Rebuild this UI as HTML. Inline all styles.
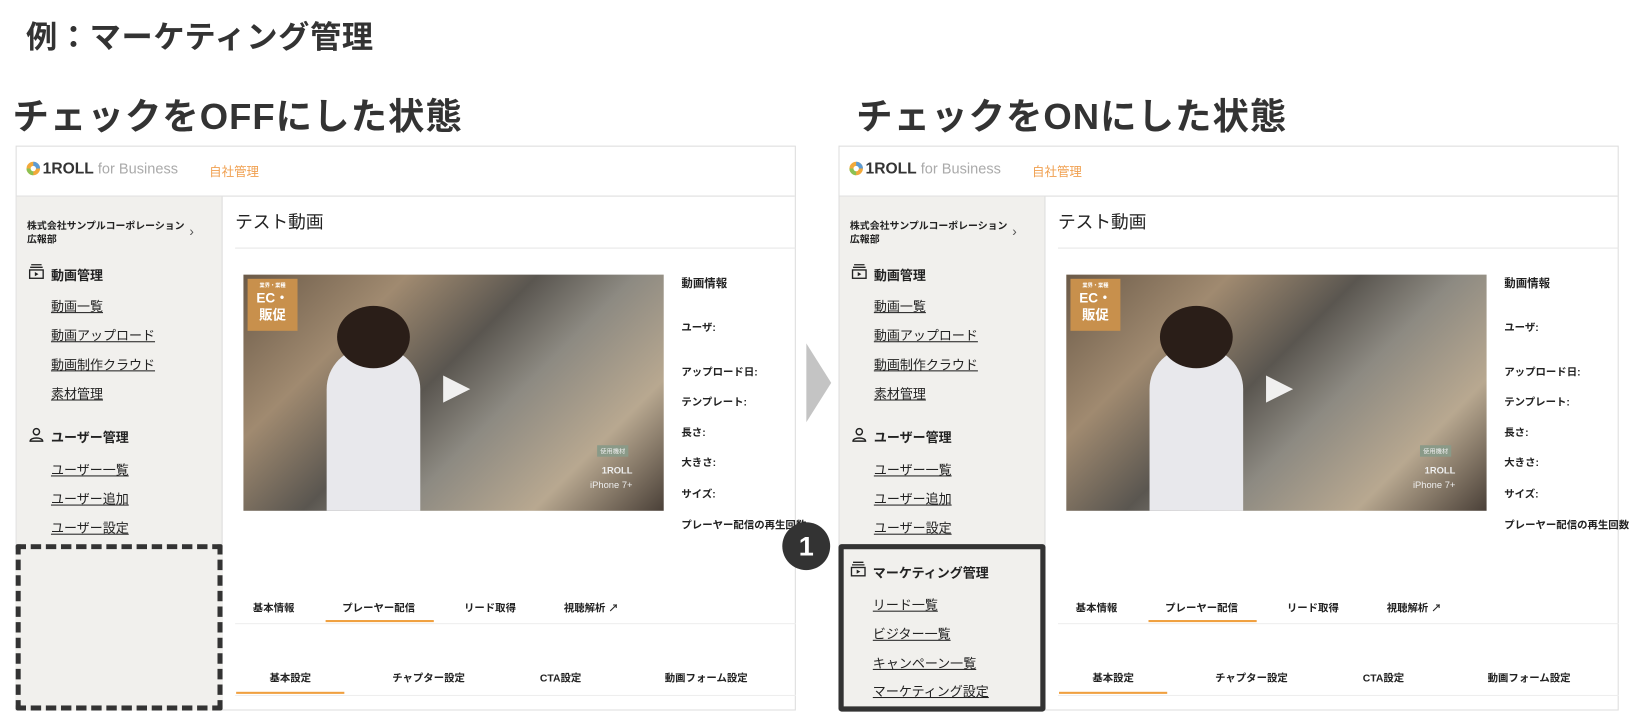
<!DOCTYPE html>
<html><head><meta charset="utf-8">
<style>
*{margin:0;padding:0;box-sizing:border-box}
html,body{width:1630px;height:728px;overflow:hidden;background:#fff}
body{font-family:"Liberation Sans","Noto Sans CJK JP",sans-serif;color:#222}
#w{position:absolute;left:0;top:0;width:1567px;height:700px;transform:scale(1.0403);transform-origin:0 0}
.a{position:absolute;white-space:nowrap}
.t1{font-size:30px;font-weight:bold;color:#333;left:25px;top:11px;letter-spacing:0.6px}
.t2{font-size:35px;font-weight:bold;color:#333;top:84px;letter-spacing:1px}
.p{position:absolute;top:140px;width:750px;height:543px;border:1px solid #ddd;background:#fff}
.hd{position:absolute;left:0;top:0;width:748px;height:48px;border-bottom:1px solid #ddd}
.sb{position:absolute;left:0;top:48px;width:198px;height:494px;background:#f1f0ed;border-right:1px solid #ddd}
.lk{font-size:12.5px;text-decoration:underline;color:#222}
.sh{font-size:12.5px;font-weight:bold}
.sm{font-size:9.5px;font-weight:bold}
.tb{font-size:10px;font-weight:bold}
.vid{position:absolute;left:218px;top:123px;width:404px;height:227px;overflow:hidden;
background:linear-gradient(135deg,#6b5a48 0%,#a08a70 25%,#5a5650 45%,#8d8a82 60%,#b8a890 80%,#4a4038 100%)}
</style></head><body><div id="w">
<div class="a t1">例：マーケティング管理</div>
<div class="a t2" style="left:12px">チェックをOFFにした状態</div>
<div class="a t2" style="left:823px">チェックをONにした状態</div>

<svg class="a" style="left:775px;top:330px" width="26" height="76"><polygon points="0,0 24,38 0,76" fill="#c4c4c4"/></svg>

<div class="p" style="left:15px" id="p1">
 <div class="hd">
  <svg class="a" style="left:9px;top:14px" width="14" height="14"><circle cx="7" cy="7" r="6.5" fill="#f2a93b"/><path d="M7 .5A6.5 6.5 0 0 1 13.5 7L7 7Z" fill="#5b9bd5"/><path d="M.5 7A6.5 6.5 0 0 0 7 13.5L7 7Z" fill="#8cc152"/><circle cx="7" cy="7" r="2.6" fill="#fff"/></svg>
  <div class="a" style="left:25px;top:13px;font-size:15px;font-weight:bold;color:#333">1ROLL <span style="font-weight:normal;color:#aaa;font-size:14px">for Business</span></div>
  <div class="a" style="left:185px;top:15px;font-size:12px;color:#f0a050">自社管理</div>
 </div>
 <div class="sb">
  <div class="a sm" style="left:10px;top:22px;line-height:13px">株式会社サンプルコーポレーション<br>広報部</div>
  <div class="a" style="left:166px;top:26px;font-size:13px;color:#555">›</div>
  <svg class="a" style="left:11px;top:64px" width="16" height="16"><path d="M3 1.5h10M2 4h12" stroke="#222" stroke-width="1.3"/><rect x="1.5" y="6.5" width="13" height="8" fill="none" stroke="#222" stroke-width="1.3"/><path d="M6.5 8.5v4l3.5-2z" fill="#222"/></svg>
  <div class="a sh" style="left:33px;top:65px">動画管理</div>
  <div class="a lk" style="left:33px;top:95px">動画一覧</div>
  <div class="a lk" style="left:33px;top:123px">動画アップロード</div>
  <div class="a lk" style="left:33px;top:151px">動画制作クラウド</div>
  <div class="a lk" style="left:33px;top:179px">素材管理</div>
  <svg class="a" style="left:11px;top:221px" width="16" height="16"><circle cx="8" cy="5" r="3" fill="none" stroke="#222" stroke-width="1.4"/><path d="M2 14c0-4 12-4 12 0z" fill="none" stroke="#222" stroke-width="1.4"/></svg>
  <div class="a sh" style="left:33px;top:221px">ユーザー管理</div>
  <div class="a lk" style="left:33px;top:252px">ユーザー一覧</div>
  <div class="a lk" style="left:33px;top:280px">ユーザー追加</div>
  <div class="a lk" style="left:33px;top:308px">ユーザー設定</div>
 </div>
 <div class="a" style="left:210px;top:58px;font-size:17px;color:#222">テスト動画</div>
 <div class="a" style="left:210px;top:97px;width:539px;height:1px;background:#e6e6e6"></div>
 <div class="vid">
  <div class="a" style="left:4px;top:4px;width:48px;height:50px;background:#c8904c;color:#fff;text-align:center;font-weight:bold;font-size:13px;line-height:16px;padding-top:3px"><div style="font-size:5px;line-height:8px">業界・業種</div>EC・<br>販促</div>
  <div class="a" style="left:80px;top:70px;width:90px;height:160px;border-radius:40px 40px 0 0;background:#e8e8ec"></div>
  <div class="a" style="left:90px;top:30px;width:70px;height:60px;border-radius:50%;background:#2a1e18"></div>
  <svg class="a" style="left:190px;top:95px" width="30" height="30"><polygon points="2,2 28,15 2,28" fill="#fff" opacity=".9"/></svg>
  <div class="a" style="right:34px;top:164px;color:#eee;font-size:6px;background:#8a9a88;padding:1px 3px">使用機材</div>
  <div class="a" style="right:30px;top:183px;color:#eee;font-size:9px;font-weight:bold">1ROLL</div>
  <div class="a" style="right:30px;top:197px;color:#eee;font-size:9px">iPhone 7+</div>
 </div>
 <div class="a" style="left:639px;top:123px;font-size:11px;font-weight:bold">動画情報</div>
 <div class="a tb" style="left:639px;top:165px">ユーザ:</div>
 <div class="a tb" style="left:639px;top:208px">アップロード日:</div>
 <div class="a tb" style="left:639px;top:237px">テンプレート:</div>
 <div class="a tb" style="left:639px;top:266px">長さ:</div>
 <div class="a tb" style="left:639px;top:295px">大きさ:</div>
 <div class="a tb" style="left:639px;top:325px">サイズ:</div>
 <div class="a tb" style="left:639px;top:355px">プレーヤー配信の再生回数:</div>
 <div class="a tb" style="left:227px;top:435px">基本情報</div>
 <div class="a tb" style="left:313px;top:435px">プレーヤー配信</div>
 <div class="a tb" style="left:430px;top:435px">リード取得</div>
 <div class="a tb" style="left:526px;top:435px">視聴解析 ↗</div>
 <div class="a" style="left:210px;top:458px;width:539px;height:1px;background:#eee"></div>
 <div class="a" style="left:297px;top:455px;width:104px;height:2px;background:#f0a040"></div>
 <div class="a tb" style="left:243px;top:502px">基本設定</div>
 <div class="a tb" style="left:361px;top:502px">チャプター設定</div>
 <div class="a tb" style="left:503px;top:502px">CTA設定</div>
 <div class="a tb" style="left:623px;top:502px">動画フォーム設定</div>
 <div class="a" style="left:210px;top:527px;width:539px;height:1px;background:#eee"></div>
 <div class="a" style="left:211px;top:524px;width:104px;height:2px;background:#f0a040"></div>
</div>

<div class="a" style="left:15px;top:523px;width:199px;height:160px;background:#f1f0ed;border:5px dashed #333;border-radius:2px"></div>

<div id="p2host"></div>
<script>
var p=document.getElementById('p1').cloneNode(true);p.id='p2';p.style.left='806px';
document.getElementById('p2host').replaceWith(p);
</script>
<div class="a" style="left:806px;top:523px;width:199px;height:161px;border:5px solid #333;border-radius:3px;background:#f1f0ed">
  <svg class="a" style="left:6px;top:11px" width="16" height="16"><path d="M3 1.5h10M2 4h12" stroke="#222" stroke-width="1.3"/><rect x="1.5" y="6.5" width="13" height="8" fill="none" stroke="#222" stroke-width="1.3"/><path d="M6.5 8.5v4l3.5-2z" fill="#222"/></svg>
  <div class="a sh" style="left:28px;top:12px">マーケティング管理</div>
  <div class="a lk" style="left:28px;top:43px">リード一覧</div>
  <div class="a lk" style="left:28px;top:71px">ビジター一覧</div>
  <div class="a lk" style="left:28px;top:99px">キャンペーン一覧</div>
  <div class="a lk" style="left:28px;top:126px">マーケティング設定</div>
</div>
<div class="a" style="left:752px;top:502px;width:46px;height:46px;border-radius:50%;background:#333;color:#fff;font-size:26px;font-weight:bold;text-align:center;line-height:46px">1</div>
</div></body></html>
